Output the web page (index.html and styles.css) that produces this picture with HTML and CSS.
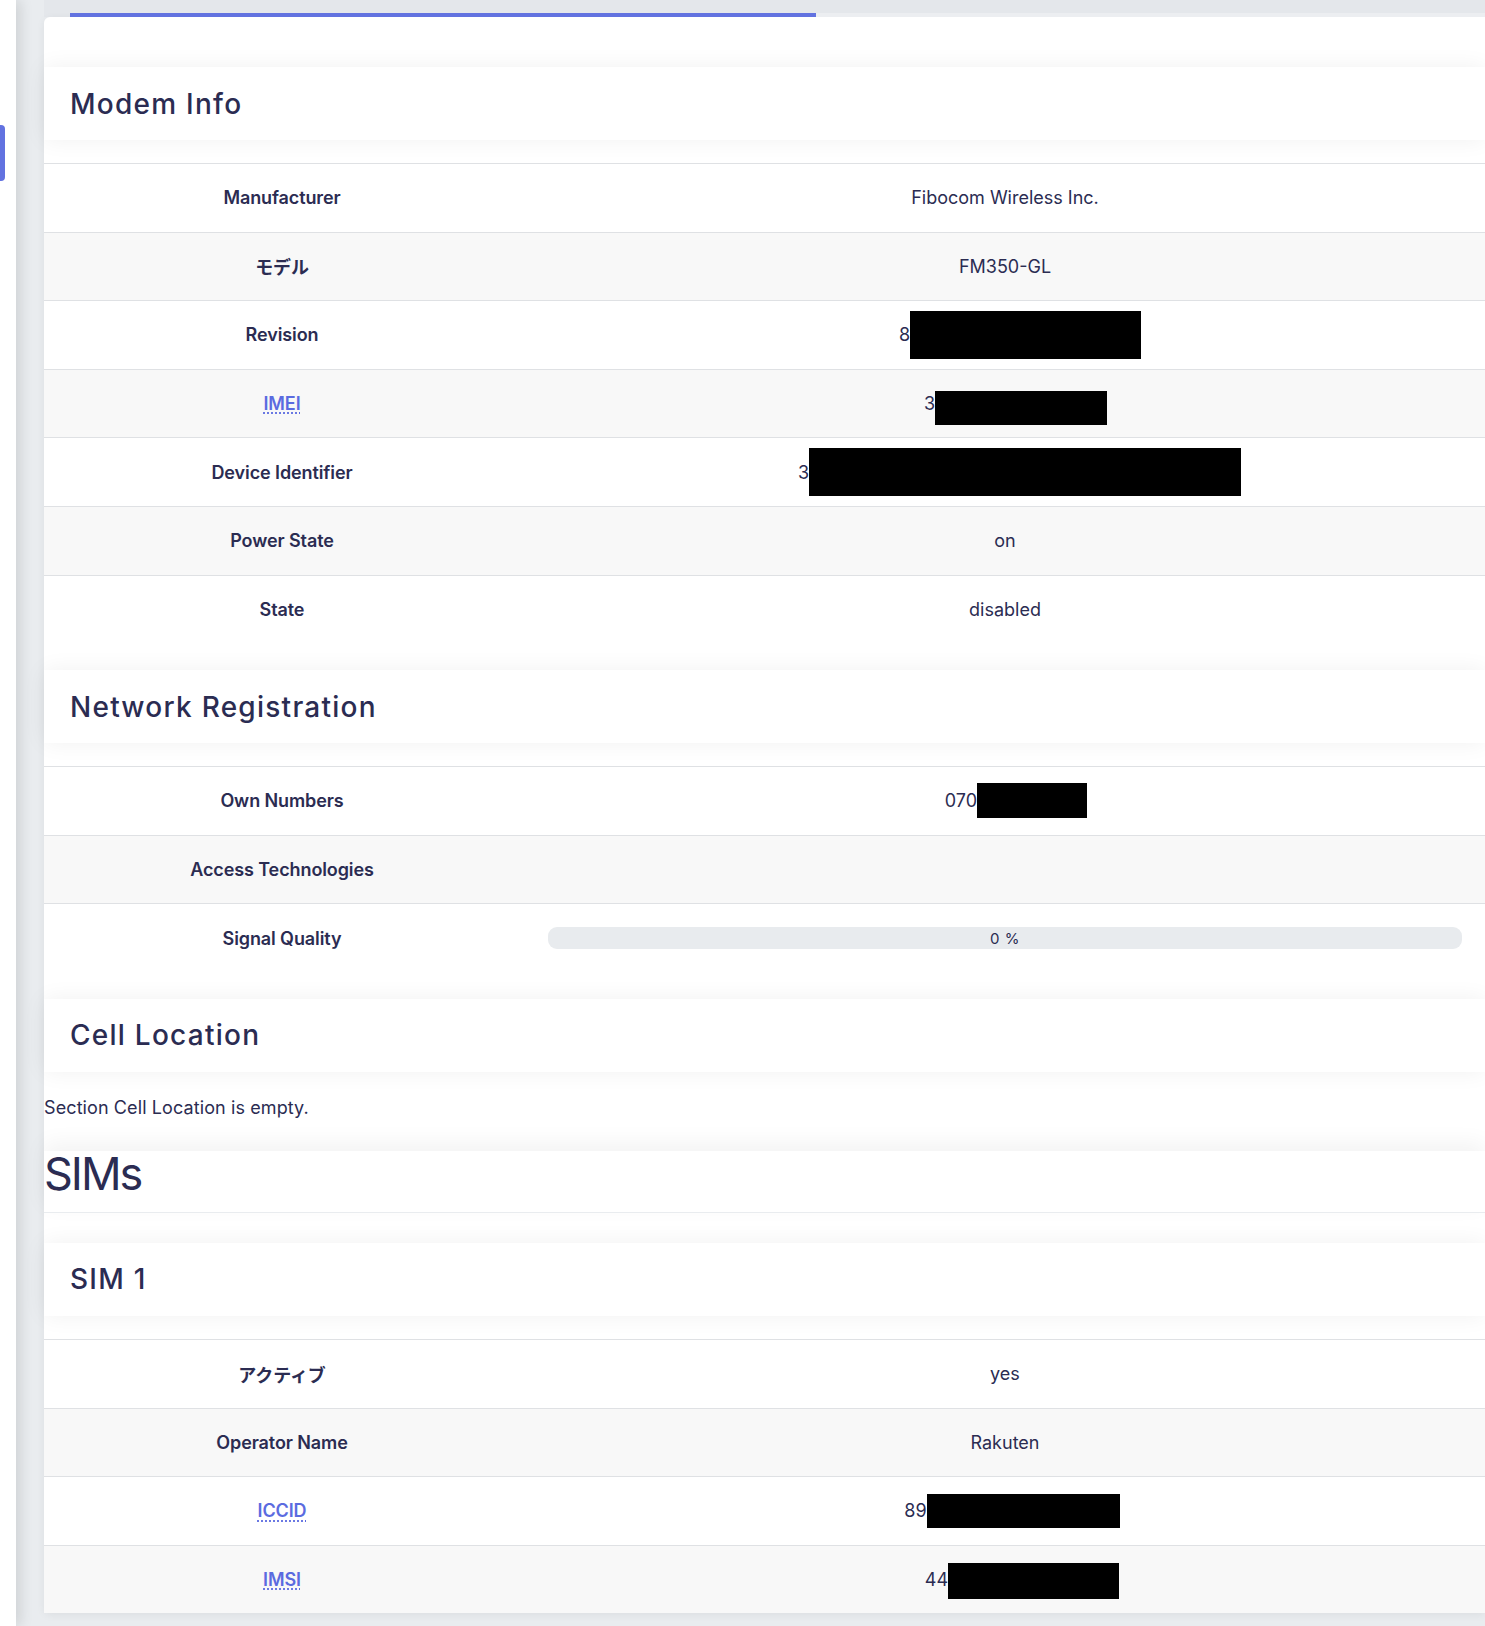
FILE: index.html
```html
<!DOCTYPE html>
<html lang="ja">
<head>
    <meta charset="UTF-8">
    <meta name="viewport" content="width=device-width, initial-scale=1.0">
    <title>Modem Status</title>
    <link rel="stylesheet" href="styles.css">
</head>
<body>
    <div class="layout">
        <nav class="sidebar">
            <span class="nav-marker"></span>
        </nav>
        <main class="main">
            <div class="tabs">
                <div class="tabs-track"><span class="tabs-active"></span></div>
            </div>
            <div class="card">
                <section class="section">
                    <header class="section-head"><h3>Modem Info</h3></header>
                    <div class="kv">
                        <div class="kv-row"><div class="kv-key">Manufacturer</div><div class="kv-val">Fibocom Wireless Inc.</div></div>
                        <div class="kv-row"><div class="kv-key">モデル</div><div class="kv-val">FM350-GL</div></div>
                        <div class="kv-row"><div class="kv-key">Revision</div><div class="kv-val">8<span class="redact redact-rev"></span></div></div>
                        <div class="kv-row"><div class="kv-key"><abbr title="International Mobile Equipment Identity">IMEI</abbr></div><div class="kv-val">3<span class="redact redact-imei"></span></div></div>
                        <div class="kv-row"><div class="kv-key">Device Identifier</div><div class="kv-val">3<span class="redact redact-dev"></span></div></div>
                        <div class="kv-row"><div class="kv-key">Power State</div><div class="kv-val">on</div></div>
                        <div class="kv-row"><div class="kv-key">State</div><div class="kv-val">disabled</div></div>
                    </div>
                </section>

                <section class="section">
                    <header class="section-head"><h3>Network Registration</h3></header>
                    <div class="kv">
                        <div class="kv-row"><div class="kv-key">Own Numbers</div><div class="kv-val">070<span class="redact redact-num"></span></div></div>
                        <div class="kv-row"><div class="kv-key">Access Technologies</div><div class="kv-val"></div></div>
                        <div class="kv-row">
                            <div class="kv-key">Signal Quality</div>
                            <div class="kv-val kv-bar">
                                <div class="progress"><span class="progress-label">0 %</span></div>
                            </div>
                        </div>
                    </div>
                </section>

                <section class="section">
                    <header class="section-head"><h3>Cell Location</h3></header>
                    <p class="empty">Section Cell Location is empty.</p>
                </section>

                <h2 class="group-title">SIMs</h2>

                <section class="section section-last">
                    <header class="section-head"><h3>SIM 1</h3></header>
                    <div class="kv">
                        <div class="kv-row"><div class="kv-key">アクティブ</div><div class="kv-val">yes</div></div>
                        <div class="kv-row"><div class="kv-key">Operator Name</div><div class="kv-val">Rakuten</div></div>
                        <div class="kv-row"><div class="kv-key"><abbr title="Integrated Circuit Card Identifier">ICCID</abbr></div><div class="kv-val">89<span class="redact redact-iccid"></span></div></div>
                        <div class="kv-row"><div class="kv-key"><abbr title="International Mobile Subscriber Identity">IMSI</abbr></div><div class="kv-val">44<span class="redact redact-imsi"></span></div></div>
                    </div>
                </section>
            </div>
        </main>
    </div>
</body>
</html>
```

FILE: styles.css
```css
body {
    margin: 0;
    padding: 0;
    background: #e9ecef;
    color: #2b2c52;
    font-family: "Inter", "Noto Sans CJK JP", sans-serif;
    font-size: 18px;
}
.layout {
    display: flex;
    min-height: 100vh;
}
.sidebar {
    width: 16px;
    flex-shrink: 0;
    background: #fff;
    padding-top: 125px;
    box-shadow: 4px 0 14px rgba(0, 0, 0, 0.12);
    position: relative;
    z-index: 1;
}
.nav-marker {
    display: block;
    width: 5px;
    height: 56px;
    background: #6272e0;
    border-radius: 0 4px 4px 0;
}
.main {
    flex: 1;
    min-width: 0;
    padding-left: 28px;
}

/* tab strip above the card */
.tabs {
    height: 17px;
    padding-left: 26px;
    display: flex;
    align-items: flex-end;
    background: #e4e7eb;
}
.tabs-track {
    flex: 1;
    height: 4px;
    background: #eceef1;
}
.tabs-active {
    display: block;
    width: 746px;
    height: 100%;
    background: #6272e0;
}

.card {
    background: #fff;
    border-radius: 6px 0 0 6px;
    padding-top: 50px;
    margin-bottom: 13px;
    box-shadow: 0 2px 8px rgba(0, 0, 0, 0.06);
}
.section-head {
    height: 73px;
    display: flex;
    align-items: center;
    padding-left: 26px;
    background: #fff;
    box-shadow: 0 0 22px rgba(0, 0, 0, 0.06);
}
.section-head h3 {
    margin: 0;
    font-size: 28px;
    font-weight: 500;
    letter-spacing: 1.25px;
}

.kv {
    margin-top: 23px;
    margin-bottom: 27px;
}
.section-last .kv {
    margin-bottom: 0;
}
.kv-row {
    display: grid;
    grid-template-columns: 481px 1fr;
    align-items: center;
    height: 68.6px;
    box-sizing: border-box;
    border-top: 1px solid #dfe1e4;
    text-align: center;
    background: #fff;
}
.kv-row:nth-child(even) {
    background: #f8f8f8;
}
.kv-key {
    padding-right: 5px;
    font-weight: 600;
    letter-spacing: -0.1px;
}
.kv-val {
    display: flex;
    justify-content: center;
    align-items: center;
}
.kv-bar {
    padding: 0 23px;
}
abbr {
    color: #5b6be0;
    text-decoration: underline dotted;
    text-underline-offset: 3px;
}

/* blacked-out values */
.redact {
    display: inline-block;
    background: #000;
}
.redact-rev { width: 231px; height: 48px; margin-right: -30px; }
.redact-imei { width: 172px; height: 34px; margin-right: -21px; margin-top: 8px; }
.redact-dev { width: 432px; height: 48px; margin-right: -29px; }
.redact-num { width: 110px; height: 35px; margin-right: -22px; }
.redact-iccid { width: 193px; height: 34px; margin-right: -14px; }
.redact-imsi { width: 171px; height: 36px; margin-right: -34px; margin-top: 3px; }

.progress {
    flex: 1;
    height: 22px;
    border-radius: 9px;
    background: #e8ebee;
    display: flex;
    align-items: center;
    justify-content: center;
}
.progress-label {
    font-size: 15px;
    letter-spacing: 0.5px;
}

.empty {
    margin: 22px 0 30px;
    line-height: 27px;
    letter-spacing: 0.1px;
}

.group-title {
    margin: 0 0 30px;
    height: 61px;
    font-size: 45px;
    font-weight: 400;
    line-height: 45px;
    letter-spacing: -2px;
    background: #fff;
    border-bottom: 1px solid #e9ecef;
    box-shadow: 0 -8px 22px rgba(0, 0, 0, 0.05);
}
```
